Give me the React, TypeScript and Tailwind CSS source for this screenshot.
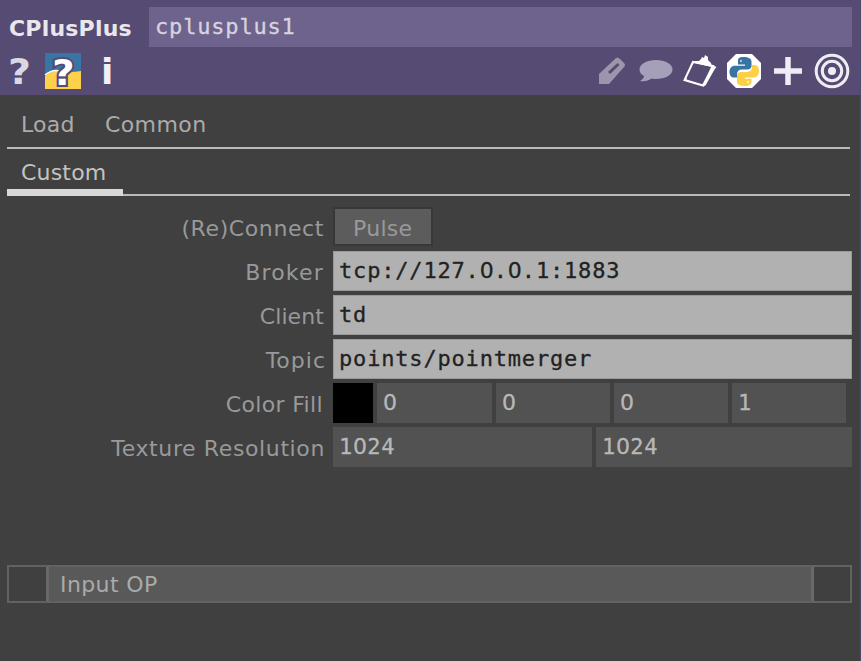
import React from "react";

const SANS = "font-['DejaVu_Sans',Verdana,sans-serif]";
const MONO = "font-['DejaVu_Sans_Mono',monospace]";

// Fixed-pitch text; zeros come from the sans face so that they are undotted.
function Mono({ text, className = "" }: { text: string; className?: string }) {
  return (
    <span className={`${MONO} whitespace-pre text-[22px] leading-[26px] tracking-[0.82px] [-webkit-text-stroke:0.3px_currentColor] ${className}`}>
      {text.split(/(0)/).map((part, i) =>
        part === "0" ? (
          <span key={i} className="font-['DejaVu_Sans',sans-serif] tracking-[0.06px]">0</span>
        ) : (
          part
        ),
      )}
    </span>
  );
}

function Row({ label, spacing, end, children }: { label: string; spacing: string; end: string; children: React.ReactNode }) {
  return (
    <div className="flex h-10">
      <div className={`${SANS} w-[333px] shrink-0 whitespace-nowrap pt-[9px] text-right text-[22px] leading-[26px] text-[#999] ${spacing} ${end}`}>
        {label}
      </div>
      {children}
    </div>
  );
}

function TextField({ value }: { value: string }) {
  return (
    <div className="flex h-10 w-[519px] border border-[#999] bg-[#b1b1b1] pl-[5px] pt-[6px] text-[#222]">
      <Mono text={value} />
    </div>
  );
}

function NumberField({ value, width }: { value: string; width: string }) {
  return (
    <div className={`h-10 shrink-0 bg-[#525252] pl-[6px] pt-[7px] text-[#b8b8b8] ${width}`}>
      <Mono text={value} className="block" />
    </div>
  );
}

function PythonLogo() {
  return (
    <svg width="36" height="36" viewBox="0 0 36 36">
      <path d="M10 1h16l9 9v16l-9 9H10l-9-9V10z" fill="#fff" />
      <path d="M18 4c-6 0-6 2-6 4.500v3h7v1.300H8.800C5.500 12.800 3.500 15.500 3.500 19s1.500 5.500 5 5.500H11v-3.300c0-2.800 2-4.700 4.700-4.700h5.800c2.200 0 4-1.500 4-3.500V8.500c0-3-3.500-4.500-7.500-4.500z" fill="#3874a4" />
      <path d="M18.500 33c-4 0-7.500-1-7.500-4.500v-5.500c0-2.500 1.800-4 4-4h6c2.700 0 5-1.900 5-4.700V12h2.500c3 0 4.500 2.500 4.500 6s-2 6.500-5 6.500H19v1.300h6.500v3c0 2.500-2 4.200-7 4.200z" fill="#fdcf45" />
      <circle cx="15" cy="8" r="1.200" fill="#9fc2da" />
      <circle cx="22" cy="29" r="1.200" fill="#fff1b5" />
    </svg>
  );
}

export default function App() {
  return (
    <div className={`${SANS} h-[661px] w-[861px] overflow-hidden border-r border-[#50486b] bg-[#404040]`}>
      <header className="h-[95px] bg-[#564b73]">
        <div className="flex pt-[7px]">
          <div className="w-[149px] shrink-0 whitespace-nowrap pl-[9px] pt-[9px] text-[22px] font-bold leading-[26px] tracking-[0.2px] text-[#e9e7ed]">
            CPlusPlus
          </div>
          <div className="h-[40px] w-[703px] bg-[#6e638c] pl-[6px] pt-[7px] text-[#d7d3df]">
            <Mono text="cplusplus1" className="block" />
          </div>
        </div>
        <div className="flex h-12 items-center">
          <div className="w-[45px] shrink-0 pl-[8px] pt-[2px]">
            <span className="inline-block origin-left scale-x-110 text-[36px] font-bold leading-[44px] text-[#dbd8e3]">?</span>
          </div>
          <svg width="36" height="36" viewBox="0 0 36 36" className="shrink-0 overflow-visible">
            <path d="M0 0h36v36H0z" fill="#3874a4" />
            <path d="M0 23Q8 16 16 18t20 0v18H0z" fill="#ffd04a" />
            <path d="M0 22Q7 16 16 18" fill="none" stroke="#fff" strokeWidth="1.500" />
            <text x="16.800" y="31.500" transform="scale(1.1 1)" textAnchor="middle" fontFamily="DejaVu Sans" fontWeight="bold" fontSize="35" fill="#fff" stroke="#564b73" strokeWidth="4" paintOrder="stroke">?</text>
          </svg>
          <div className="w-[517px] shrink-0 pl-[20px] pt-[2px] text-[36px] font-bold leading-[44px] text-[#f1f0f4]">i</div>
          <svg width="28" height="28" viewBox="0 0 28 28" className="shrink-0">
            <path d="M1 27V17L18 1q2-1 4 1l4 4q2 2 0 4L11 27z" fill="#9c95ac" />
            <path d="M11 16L20.500 7" stroke="#564b73" strokeWidth="3" />
          </svg>
          <svg width="34" height="24" viewBox="0 0 34 24" className="ml-[13px] shrink-0">
            <ellipse cx="17" cy="10.500" rx="16.500" ry="9.500" fill="#a69fb9" />
            <path d="M5 15q1 4-4 7 7 1 12-3z" fill="#a69fb9" />
          </svg>
          <svg width="36" height="36" viewBox="0 0 36 36" className="ml-[9px] shrink-0">
            <path d="M11 9L2.500 27 21 32.500 31 13z" fill="none" stroke="#fff" strokeWidth="2" />
            <path d="M30 12l4.500 2-2 2.500-9 16-2.500 1z" fill="#fff" />
            <path d="M13 8h4l2-2 1-2 2 1 1-3 3 2v3l3 3 1 4-17-4z" fill="#fff" />
            <path d="M2 28l2-5 1 5z" fill="#fff" />
          </svg>
          <div className="ml-[8px] shrink-0"><PythonLogo /></div>
          <svg width="28" height="28" viewBox="0 0 28 28" className="ml-[12px] shrink-0">
            <path d="M14 0v28M0 14h28" stroke="#efedf4" strokeWidth="5.500" />
          </svg>
          <svg width="36" height="36" viewBox="0 0 36 36" className="ml-[12px] shrink-0" fill="none" stroke="#efedf4" strokeWidth="3">
            <circle cx="18" cy="18" r="15.800" />
            <circle cx="18" cy="18" r="9.700" />
            <circle cx="18" cy="18" r="4" fill="#efedf4" stroke="none" />
          </svg>
        </div>
      </header>

      <nav className="ml-[7px] flex h-[54px] w-[843px] border-b-2 border-[#bababa] pl-[14px] pt-[17px] text-[22px] leading-[26px] text-[#ababab]">
        <span className="w-[84px] tracking-[0.2px]">Load</span>
        <span className="tracking-[0.4px]">Common</span>
      </nav>
      <nav className="ml-[7px] flex h-[47px] w-[843px] border-b-2 border-[#bababa] text-[22px] leading-[26px] text-[#c3c3c3]">
        <span className="h-[47px] w-[116px] border-b-[7px] border-[#d8d8d8] pl-[14px] pt-[11px] tracking-[0.2px]">Custom</span>
      </nav>

      <main className="flex flex-col gap-1 pt-[11px]">
        <Row label="(Re)Connect" spacing="tracking-[0.6px]" end="pr-[9px]">
          <div className="flex h-[39px] w-[100px] border-2 border-[#383838] bg-[#5c5c5c] pt-[7px] text-[22px] leading-[26px] tracking-[0.3px] text-[#999]">
            <span className="pl-[18px]">Pulse</span>
          </div>
        </Row>
        <Row label="Broker" spacing="tracking-[1.2px]" end="pr-[9px]"><TextField value="tcp://127.0.0.1:1883" /></Row>
        <Row label="Client" spacing="tracking-[0.1px]" end="pr-[9px]"><TextField value="td" /></Row>
        <Row label="Topic" spacing="tracking-[1px]" end="pr-[7px]"><TextField value="points/pointmerger" /></Row>
        <Row label="Color Fill" spacing="tracking-[0.35px]" end="pr-[10px]">
          <div className="h-10 w-10 bg-black" />
          <div className="ml-1 flex gap-1">
            <NumberField value="0" width="w-[115px]" />
            <NumberField value="0" width="w-[114px]" />
            <NumberField value="0" width="w-[114px]" />
            <NumberField value="1" width="w-[114px]" />
          </div>
        </Row>
        <Row label="Texture Resolution" spacing="tracking-[0.62px]" end="pr-[8px]">
          <div className="flex gap-1">
            <NumberField value="1024" width="w-[259px]" />
            <NumberField value="1024" width="w-[256px]" />
          </div>
        </Row>
      </main>

      <div className="ml-[7px] mt-[98px] flex h-[38px] w-[845px] border-2 border-[#626262]">
        <div className="w-[37px]" />
        <div className="w-[768px] border-x-[3px] border-[#696969] bg-[#595959] pl-[11px] pt-[5px] text-[22px] leading-[26px] tracking-[0.4px] text-[#aaa]">Input OP</div>
      </div>
    </div>
  );
}
